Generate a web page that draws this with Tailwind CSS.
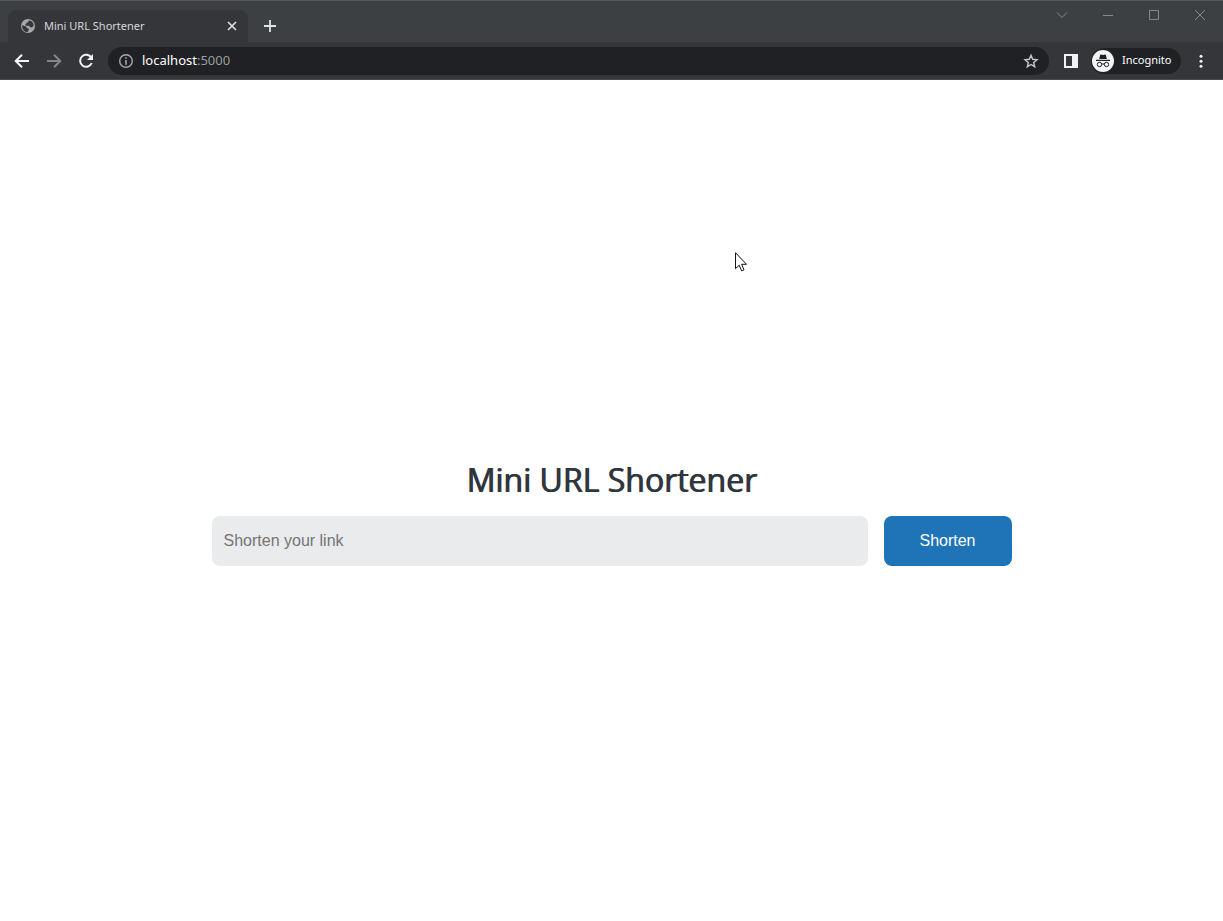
<!DOCTYPE html>
<html lang="en">
<head>
<meta charset="utf-8">
<meta name="viewport" content="width=device-width, initial-scale=1">
<title>Mini URL Shortener</title>
<script src="https://cdn.jsdelivr.net/npm/@tailwindcss/browser@4"></script>
</head>
<body class="flex min-h-screen flex-col bg-white font-['Open_Sans','Noto_Sans',sans-serif]">
<header class="border-b border-[#4a4b4f] bg-[#3c4043] text-white">
  <div class="flex h-[42px] items-start border-t border-[#55585a]">
    <div class="ml-2 mt-[9px] flex h-8 w-60 items-center rounded-t-lg bg-[#35363a] pl-3 pr-2">
      <svg class="size-4" viewBox="0 0 16 16" aria-hidden="true"><circle cx="8" cy="8" r="7" fill="#a5a8ab"/><path d="M2.300 7.200 6 8.500l1.200 1.800 1.800.4-.4 1.500-1.100 2A6 6 0 0 1 2 8zM8.800 2.200v1.100L7.600 4.500H6.400v1.700H5.200L5.600 7.800H9l1 1.500 1.700.2 2-1.700A5.800 5.800 0 0 0 8.800 2.200z" fill="#35363a"/></svg>
      <span class="ml-2 flex-1 font-['Noto_Sans',sans-serif] text-[11px] text-[#d5d7da]">Mini URL Shortener</span>
      <button aria-label="Close tab" class="flex size-4 items-center justify-center"><svg class="size-4" viewBox="0 0 16 16" fill="none" stroke="#dfe1e3" stroke-width="1.600"><path d="m4 4 8 8M12 4l-8 8"/></svg></button>
    </div>
    <button aria-label="New tab" class="ml-3 mt-4 flex size-5 items-center justify-center"><svg class="size-5" viewBox="0 0 20 20" fill="none" stroke="#e1e3e5" stroke-width="1.800"><path d="M10 3v12M4 9h12"/></svg></button>
    <div class="ml-auto flex text-[#85888b]">
      <button aria-label="Search tabs" class="flex h-7 w-[46px] items-center justify-center"><svg class="size-4" viewBox="0 0 16 16" fill="none" stroke="currentColor"><path d="m3 5.500 5 5 5-5"/></svg></button>
      <button aria-label="Minimize" class="flex h-7 w-[46px] items-center justify-center"><svg class="size-4" viewBox="0 0 16 16" fill="none" stroke="currentColor"><path d="M3 8.500h10"/></svg></button>
      <button aria-label="Maximize" class="flex h-7 w-[46px] items-center justify-center"><svg class="size-4" viewBox="0 0 16 16" fill="none" stroke="currentColor"><path d="M3.500 3.500h9v9h-9z"/></svg></button>
      <button aria-label="Close window" class="flex h-7 w-[46px] items-center justify-center"><svg class="size-4" viewBox="0 0 16 16" fill="none" stroke="currentColor"><path d="m3 3 10 10M13 3 3 13"/></svg></button>
    </div>
  </div>
  <div class="flex h-[37px] items-center bg-[#35363a] pl-3 pr-3.5">
    <button aria-label="Back"><svg class="size-5" viewBox="0 0 20 20" fill="none" stroke="#f4f5f6" stroke-width="2"><path d="M17 10H4M10 3.700 3.700 10l6.300 6.300"/></svg></button>
    <button aria-label="Forward" class="ml-3"><svg class="size-5" viewBox="0 0 20 20" fill="none" stroke="#85868a" stroke-width="2"><path d="M3 10h13M10 3.700l6.300 6.300-6.300 6.300"/></svg></button>
    <button aria-label="Reload" class="ml-3"><svg class="size-5" viewBox="0 0 20 20"><path d="M15.300 6.700A6 6 0 1 0 15.700 12" fill="none" stroke="#f4f5f6" stroke-width="2"/><path d="M17 3v6h-6z" fill="#f4f5f6"/></svg></button>
    <div class="ml-3 flex h-7 min-w-0 flex-1 items-center rounded-full bg-[#202124] pl-2.5 pr-2.5">
      <svg class="size-4" viewBox="0 0 16 16" aria-hidden="true"><circle cx="8" cy="8" r="6.300" fill="none" stroke="#a5a8ab" stroke-width="1.400"/><path d="M7.200 4.200h1.600v1.600H7.200zM7.200 7h1.600v4.800H7.200z" fill="#a5a8ab"/></svg>
      <a href="#" class="ml-2 flex-1 font-['Noto_Sans',sans-serif] text-[13px] text-white">localhost<span class="text-[#9a9da1]">:5000</span></a>
      <button aria-label="Bookmark this tab"><svg class="size-4" viewBox="0 0 16 16" fill="none" stroke="#c5c8cb" stroke-width="1.400"><path d="m8 2.300 1.700 4 4.300.4-3.300 2.800 1 4.200L8 11.500l-3.700 2.200 1-4.200L2 6.700l4.300-.4z"/></svg></button>
    </div>
    <button aria-label="Side panel" class="ml-3.5"><svg class="size-4" viewBox="0 0 16 16"><path fill="#f1f3f4" fill-rule="evenodd" d="M1 1h14v14H1zM3 3v10h6V3z"/></svg></button>
    <button class="ml-3 flex h-[26px] w-[90px] items-center rounded-full bg-[#202124] pl-px font-['Noto_Sans',sans-serif] text-[11px] text-white">
      <svg class="size-[22px]" viewBox="0 0 22 22" aria-hidden="true"><circle cx="11" cy="11" r="11" fill="#f1f3f4"/><path d="m7.200 9 .9-4 .8-.6 2.100.5 2.100-.5.8.6.9 4z" fill="#202124"/><path d="M4 10.400h14" stroke="#202124" stroke-width="1.200"/><g fill="none" stroke="#202124"><circle cx="7.500" cy="14.500" r="2.200"/><circle cx="14.500" cy="14.500" r="2.200"/><path d="M9.700 14.200q1.300-.7 2.600 0"/></g></svg>
      <span class="ml-2">Incognito</span>
    </button>
    <button aria-label="Menu" class="ml-3"><svg class="size-4" viewBox="0 0 16 16" fill="#f1f3f4"><circle cx="8" cy="3.200" r="1.500"/><circle cx="8" cy="8.200" r="1.500"/><circle cx="8" cy="13.200" r="1.500"/></svg></button>
  </div>
</header>
<main class="flex flex-1 flex-col items-center justify-center px-4 pt-5">
  <div class="w-full max-w-[800px]">
    <h1 class="text-center text-[32px]/12 font-medium text-[#2f363d] [text-shadow:1px_0_0_#2f363d]">Mini URL Shortener</h1>
    <form class="mt-3 flex gap-4 font-['Liberation_Sans',sans-serif] text-base">
      <input type="text" aria-label="Shorten your link" placeholder="Shorten your link" class="h-[50px] min-w-0 flex-1 rounded-lg bg-[#e9ebec] px-3 text-[#2f363d] placeholder:text-[#757575]">
      <button type="button" class="h-[50px] w-32 rounded-lg bg-[#1f73b7] text-white">Shorten</button>
    </form>
  </div>
</main>
<svg class="pointer-events-none absolute left-[735px] top-[252px] h-5 w-3" viewBox="0 0 12 20" aria-hidden="true"><path d="M.5.700v16l3.700-3.500 2.400 5.600 2.400-1-2.400-5.500h4.900z" fill="#fff" stroke="#111"/></svg>
</body>
</html>
